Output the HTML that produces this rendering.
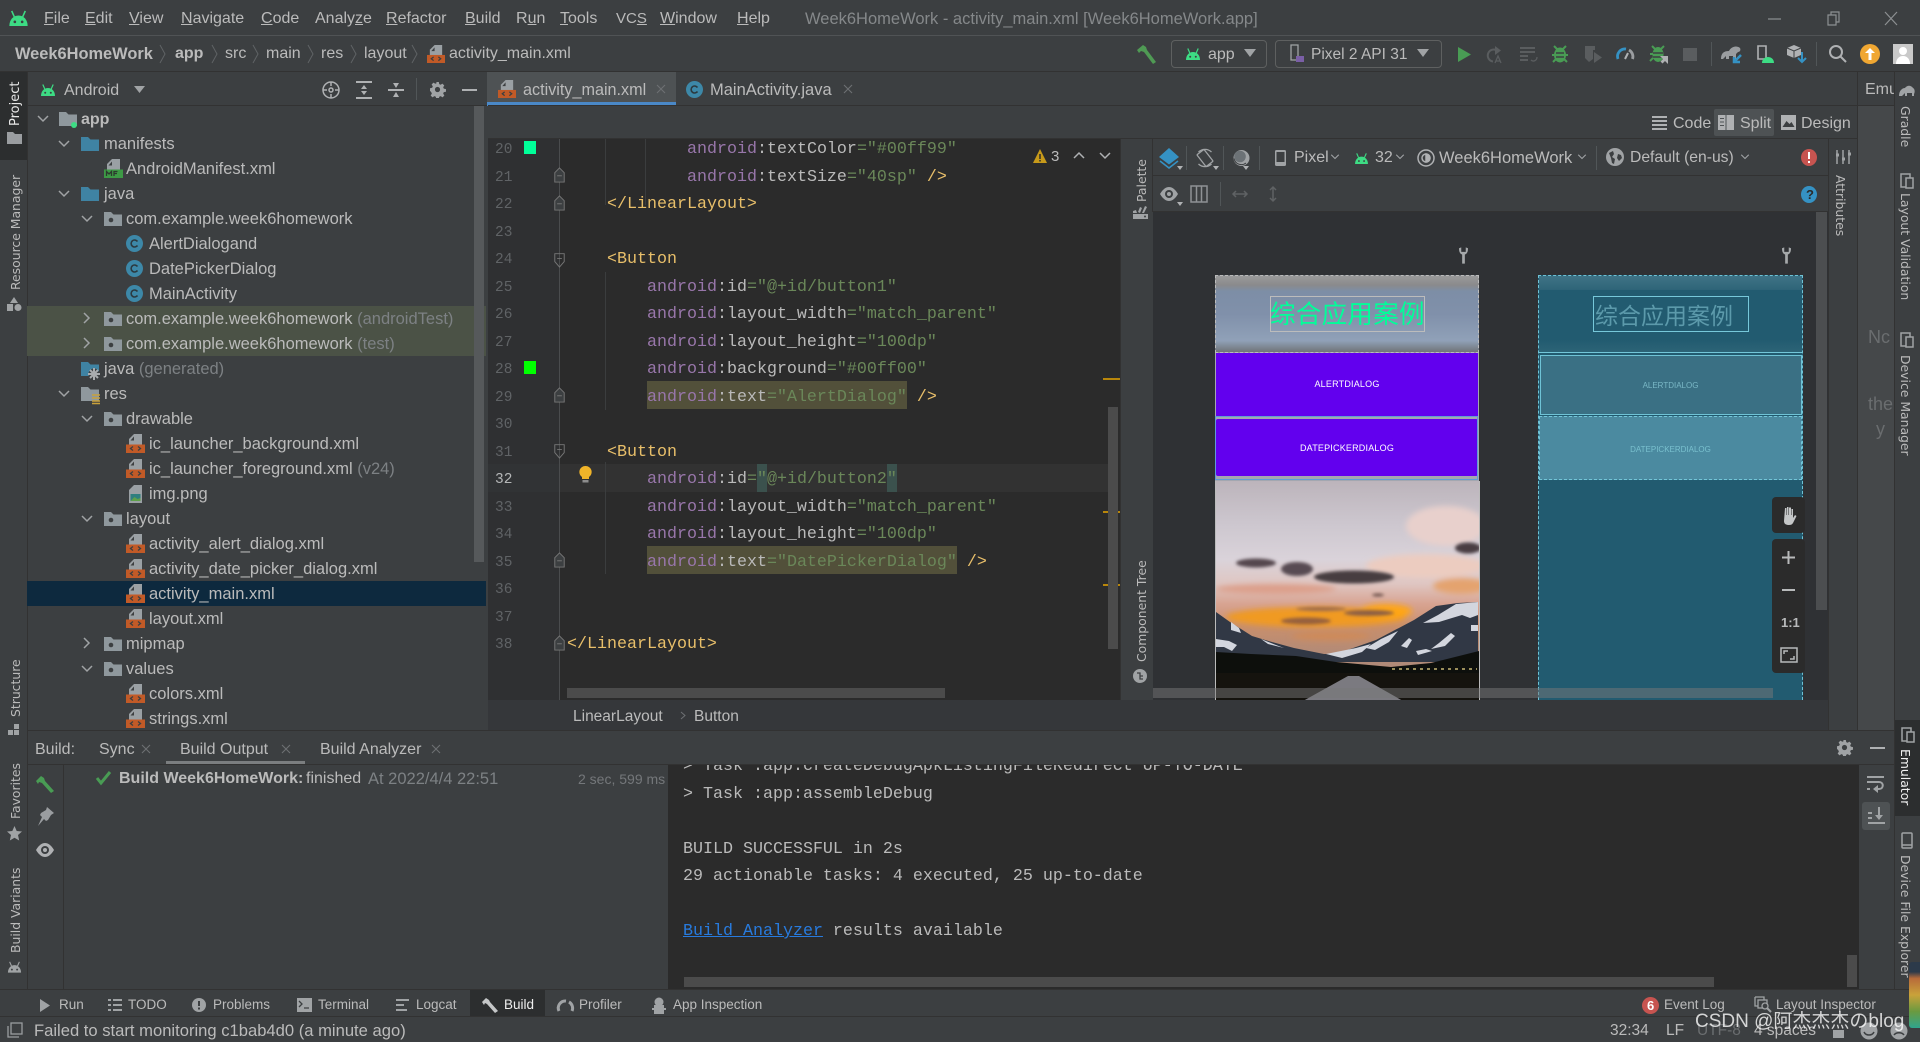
<!DOCTYPE html>
<html><head><meta charset="utf-8"><title>Week6HomeWork</title>
<style>
html,body{margin:0;padding:0;background:#3c3f41}
#a{position:relative;width:1920px;height:1042px;overflow:hidden;background:#3c3f41;font-family:"Liberation Sans","Noto Sans CJK SC",sans-serif;color:#bbb;font-size:16px}
#a div,#a span.t,#a svg.i{position:absolute}
.t{position:absolute;white-space:nowrap;line-height:24px;height:24px}
.g{color:#7d8184}
.b{font-weight:bold}
.r{position:absolute;white-space:nowrap;height:25px;line-height:25px;font-size:16.5px;color:#bbb;margin-top:1px;margin-left:-1px}
.c{position:absolute;white-space:pre;left:0;height:27.5px;line-height:27.5px;margin-top:2px;font-family:"Liberation Mono",monospace;font-size:16.67px;color:#bababa}
.n{position:absolute;left:495px;height:27.5px;line-height:27.5px;margin-top:3px;font-family:"Liberation Mono",monospace;font-size:14.5px;color:#606366}
.p{color:#9876aa}.s{color:#6a8759}.y{color:#e8bf6a}
.v{position:absolute;white-space:nowrap;font-family:"DejaVu Sans",sans-serif;font-size:12.4px;line-height:16px;height:16px;transform-origin:0 0;color:#bbb}
.u{transform:rotate(-90deg)}.w{transform:rotate(90deg)}
.h{font-size:13.5px}
svg.i{overflow:visible}
</style></head><body>
<svg width="0" height="0" style="position:absolute">
<symbol id="and" viewBox="0 0 16 13"><path fill="none" stroke="currentColor" stroke-width="1.200" d="M4.800 6L2.800 1.500M11.200 6l2-4.500"/><path fill="currentColor" d="M1 13C1 8.300 4 5 8 5s7 3.300 7 8z"/><circle cx="5.200" cy="9.800" r="1" fill="#3c3f41"/><circle cx="10.800" cy="9.800" r="1" fill="#3c3f41"/></symbol>
<symbol id="xml" viewBox="0 0 19 19"><path fill="#9aa0a4" d="M8 0h8v11H3V5z"/><path fill="#3c3f41" d="M8 2.500v4H4.500z"/><rect y="10.500" width="19" height="8.500" fill="#c15a27"/><path fill="none" stroke="#3c3f41" stroke-width="1.300" d="M7 12.500l-2.500 2 2.500 2M12 12.500l2.500 2-2.500 2"/></symbol>
<symbol id="mf" viewBox="0 0 19 19"><path fill="#9aa0a4" d="M8 0h8v11H3V5z"/><path fill="#3c3f41" d="M8 2.500v4H4.500z"/><rect y="10.500" width="19" height="8.500" fill="#3d9a45"/><path fill="none" stroke="#2c3a2e" stroke-width="1.300" d="M2.500 17v-4.500L5 15l2.500-2.500V17M10 17v-4.500h3.500M10 14.500h3"/></symbol>
<symbol id="fb" viewBox="0 0 18 14"><path fill="#3f83a3" d="M0 0h7l2.500 2.500H18V14H0z"/></symbol>
<symbol id="fg" viewBox="0 0 18 14"><path fill="#8f989d" d="M0 0h7l2.500 2.500H18V14H0z"/><circle cx="7" cy="8" r="2.300" fill="#3c3f41"/></symbol>
<symbol id="fp" viewBox="0 0 18 14"><path fill="#8f989d" d="M0 0h7l2.500 2.500H18V14H0z"/></symbol>
<symbol id="cl" viewBox="0 0 17 17"><circle cx="8.500" cy="8.500" r="8.500" fill="#3d88a8"/><path fill="none" stroke="#2c3a40" stroke-width="1.600" d="M11.500 6.500A3.500 3.500 0 1 0 11.500 10.500"/></symbol>
<symbol id="dn" viewBox="0 0 12 8"><path fill="none" stroke="#a0a3a5" stroke-width="1.500" d="M1 1l5 5 5-5"/></symbol>
<symbol id="rt" viewBox="0 0 8 12"><path fill="none" stroke="#a0a3a5" stroke-width="1.500" d="M1 1l5 5-5 5"/></symbol>
<symbol id="gr" viewBox="0 0 16 16"><path fill="#a0a3a5" d="M6.600 0h2.800l.4 2.200 1.500.7 1.900-1.200 2 2-1.200 1.900.7 1.500 2.300.5v2.800l-2.300.4-.7 1.600 1.300 1.900-2 2-1.900-1.300-1.600.7-.4 2.300H6.600l-.4-2.300-1.600-.7-1.900 1.300-2-2 1.300-1.900-.7-1.600L0 9.400V6.600l2.300-.5.700-1.500-1.300-1.900 2-2 1.900 1.200 1.500-.7z" transform="scale(.94)"/><circle cx="7.500" cy="7.500" r="2.600" fill="#3c3f41"/></symbol>
<symbol id="fd" viewBox="0 0 14 20"><path fill="#3c3f41" stroke="#777" stroke-width="1.200" d="M7 1L13 7v12H1V7z"/><path fill="none" stroke="#777" stroke-width="1.200" d="M4 11h6"/></symbol>
<symbol id="fdn" viewBox="0 0 14 20"><path fill="none" stroke="#777" stroke-width="1.200" d="M1 2h12v10l-6 7-6-7zM4 8h6"/></symbol>
<symbol id="wr" viewBox="0 0 10 18"><path fill="#a5a8aa" d="M0 1C0 5 1 7 3.500 8v10h3V8C9 7 10 5 10 1L7.500 0v5h-5V0z"/></symbol>
<symbol id="x" viewBox="0 0 10 10"><path stroke="#6d7073" stroke-width="1.100" d="M1 1l8 8M9 1l-8 8"/></symbol>
</svg>
<div id="a">

<!-- top bars -->
<div style="left:0;top:35px;width:1920px;height:1px;background:#505355"></div>
<div style="left:0;top:71px;width:1920px;height:1px;background:#323232"></div>
<svg class="i" style="left:8px;top:9px;color:#3ddc84" width="21" height="17"><use href="#and"/></svg>
<span class="t" style="left:44px;top:7px"><u>F</u>ile</span>
<span class="t" style="left:85px;top:7px"><u>E</u>dit</span>
<span class="t" style="left:129px;top:7px"><u>V</u>iew</span>
<span class="t" style="left:181px;top:7px"><u>N</u>avigate</span>
<span class="t" style="left:261px;top:7px"><u>C</u>ode</span>
<span class="t" style="left:315px;top:7px">Analy<u>z</u>e</span>
<span class="t" style="left:386px;top:7px"><u>R</u>efactor</span>
<span class="t" style="left:465px;top:7px"><u>B</u>uild</span>
<span class="t" style="left:516px;top:7px">R<u>u</u>n</span>
<span class="t" style="left:560px;top:7px"><u>T</u>ools</span>
<span class="t" style="left:616px;top:7px;font-size:15px">VC<u>S</u></span>
<span class="t" style="left:660px;top:7px"><u>W</u>indow</span>
<span class="t" style="left:737px;top:7px"><u>H</u>elp</span>
<span class="t" style="left:805px;top:7px;color:#85888a;font-size:16.500px">Week6HomeWork - activity_main.xml [Week6HomeWork.app]</span>
<svg class="i" style="left:1768px;top:10px" width="130" height="18" fill="none" stroke="#8d9092" stroke-width="1.200"><path d="M0 9h13"/><path d="M60 5h8v10h-8zM63 5V2h8v10h-3"/><path d="M117 2l12 13M129 2l-12 13"/></svg>

<!-- nav -->
<span class="t b" style="left:15px;top:42px;font-size:16.400px">Week6HomeWork</span>
<span class="t b" style="left:175px;top:42px">app</span>
<span class="t" style="left:225px;top:42px">src</span>
<span class="t" style="left:266px;top:42px">main</span>
<span class="t" style="left:321px;top:42px">res</span>
<span class="t" style="left:364px;top:42px">layout</span>
<svg class="i" style="left:160px;top:44px" width="270" height="20" fill="none" stroke="#5f6365"><path d="M0 1l5 9-5 9M52 1l5 9-5 9M93 1l5 9-5 9M148 1l5 9-5 9M191 1l5 9-5 9M252 1l5 9-5 9"/></svg>
<svg class="i" style="left:427px;top:45px" width="18" height="18"><use href="#xml"/></svg>
<span class="t" style="left:449px;top:42px">activity_main.xml</span>

<!-- nav right -->
<svg class="i" style="left:1137px;top:44px" width="22" height="20"><path fill="#4f9a54" d="M0 6l6-5 3 2 1 3 9 12-3 2-9-12-3-1-2 2z"/></svg>
<div style="left:1171px;top:40px;width:94px;height:26px;border:1px solid #5e6060;border-radius:4px"></div>
<svg class="i" style="left:1185px;top:47px;color:#3ddc84" width="16" height="13"><use href="#and"/></svg>
<span class="t" style="left:1208px;top:43px">app</span>
<svg class="i" style="left:1244px;top:49px" width="12" height="8"><path fill="#a0a3a5" d="M0 0h12L6 8z"/></svg>
<div style="left:1275px;top:40px;width:165px;height:26px;border:1px solid #5e6060;border-radius:4px"></div>
<svg class="i" style="left:1290px;top:44px" width="18" height="20" fill="none"><path stroke="#a0a3a5" stroke-width="1.300" d="M1 1h7v15H1z"/><rect x="6" y="12" width="8" height="6" fill="#7a5fa6"/></svg>
<span class="t" style="left:1311px;top:43px;font-size:15.500px">Pixel 2 API 31</span>
<svg class="i" style="left:1417px;top:49px" width="12" height="8"><path fill="#a0a3a5" d="M0 0h12L6 8z"/></svg>
<svg class="i" style="left:1458px;top:47px" width="13" height="15"><path fill="#499c54" d="M0 0l13 7.500L0 15z"/></svg>
<svg class="i" style="left:1486px;top:46px" width="18" height="18" fill="none" stroke="#5a5d5f" stroke-width="2"><path d="M11 4.500a6 6 0 1 0-4 11"/><path fill="#5a5d5f" stroke="none" d="M9 0l6 4.500-6 4.500z"/><path stroke-width="1.300" d="M9 17l3-7 3 7M10 15h4"/></svg>
<svg class="i" style="left:1520px;top:47px" width="18" height="16" stroke="#5a5d5f" stroke-width="2" fill="none"><path d="M0 1h15M0 5h15M0 9h8M0 13h8"/><path stroke-width="1.300" d="M17 10c0 4-4 5-6 3"/></svg>
<svg class="i" style="left:1552px;top:45px" width="16" height="18"><ellipse cx="8" cy="10" rx="6" ry="7.500" fill="#499c54"/><path stroke="#499c54" stroke-width="2" d="M2 1l3 3M14 1l-3 3M0 10h3M16 10h-3M1 17l3-3M15 17l-3-3"/><path stroke="#3c3f41" stroke-width="1.500" d="M4 8h8M4 12h8"/></svg>
<svg class="i" style="left:1584px;top:45px" width="19" height="18"><path fill="#5a5d5f" d="M1 1h10v4H9v9l-4 3-4-4z"/><path fill="#5a5d5f" d="M10 7l8 5.500-8 5.500z"/></svg>
<svg class="i" style="left:1616px;top:47px" width="18" height="13" fill="none" stroke-width="2.800"><path stroke="#3592c4" d="M2 12A7.500 7.500 0 0 1 10 2"/><path stroke="#9a9da0" d="M13 3a7.500 7.500 0 0 1 3.500 9"/><path stroke="#afb1b3" stroke-width="2" d="M9 12l3-6"/></svg>
<svg class="i" style="left:1650px;top:45px" width="20" height="20"><ellipse cx="8" cy="9.500" rx="5.500" ry="7.500" fill="#499c54"/><path stroke="#499c54" stroke-width="2" d="M2 1l3 3M14 1l-3 3M0 9h3M0 16l3-3"/><path stroke="#3c3f41" stroke-width="1.500" d="M3 8h10M3 12h10"/><path fill="#afb1b3" d="M10 11h8v8l-3-3-2.500 2.500-2-2L13 14z"/></svg>
<div style="left:1683px;top:48px;width:14px;height:13px;background:#5a5d5f"></div>
<div style="left:1711px;top:42px;width:1px;height:24px;background:#515658"></div>
<svg class="i" style="left:1721px;top:45px" width="22" height="19"><path fill="#9a9da0" d="M0 14c0-6 3-8 8-8 2-4 7-6 11-3 1 2 0 4-2 4l-2 2v5h-3v-3H8v3H5v-3l-3 3z"/><path fill="none" stroke="#3592c4" stroke-width="2.500" d="M20 10l-7 7M13 12v5h6"/></svg>
<svg class="i" style="left:1757px;top:45px" width="18" height="19"><path fill="none" stroke="#afb1b3" stroke-width="1.600" d="M1 1h8v13H1z"/><path fill="#3ddc84" d="M5 18c0-4 3-6 6-6s6 2 6 6z"/></svg>
<svg class="i" style="left:1787px;top:45px" width="21" height="19"><path fill="#afb1b3" d="M7 0l7 3v7l-7 3-7-3V3z"/><path fill="none" stroke="#3c3f41" d="M0 3l7 3 7-3M7 6v7"/><path stroke="#3592c4" stroke-width="2" fill="none" d="M15 7v10M11 13l4 4 4-4"/></svg>
<div style="left:1816px;top:42px;width:1px;height:24px;background:#515658"></div>
<svg class="i" style="left:1829px;top:45px" width="18" height="18" fill="none" stroke="#afb1b3" stroke-width="2"><circle cx="7" cy="7" r="6"/><path d="M11 11l6 6"/></svg>
<div style="left:1860px;top:44px;width:20px;height:20px;border-radius:50%;background:#f0a732"></div>
<svg class="i" style="left:1865px;top:48px" width="10" height="12"><path fill="#fff" d="M5 0l5 5H6.500v7h-3V5H0z"/></svg>
<div style="left:1893px;top:44px;width:20px;height:20px;background:#c9c9c9"></div>
<svg class="i" style="left:1893px;top:44px" width="20" height="20"><circle cx="10" cy="7" r="4" fill="#fff"/><path fill="#fff" d="M3 20c0-5 3-8 7-8s7 3 7 8z"/></svg>

<!-- left stripe -->
<div style="left:0;top:72px;width:27px;height:88px;background:#2c2e2f"></div>
<div style="left:27px;top:72px;width:1px;height:917px;background:#323232"></div>
<span class="v u" style="left:8px;top:126px;color:#e8e8e8;font-size:13px">Project</span>
<svg class="i" style="left:7px;top:132px" width="15" height="12"><path fill="#9a9da0" d="M0 0h6l2 2h7v10H0z"/></svg>
<span class="v u" style="left:8px;top:290px">Resource Manager</span>
<svg class="i" style="left:7px;top:297px" width="15" height="14"><path fill="#a0a3a5" d="M7 0l4 6H3z"/><rect y="7" width="6" height="7" fill="#a0a3a5"/><circle cx="11" cy="10.500" r="3.500" fill="#a0a3a5"/></svg>
<span class="v u" style="left:8px;top:717px">Structure</span>
<svg class="i" style="left:8px;top:724px" width="12" height="12"><path fill="#a0a3a5" d="M6 0h5v5H6zM0 6h5v5H0zM6 6h5v5H6z"/></svg>
<span class="v u" style="left:8px;top:819px">Favorites</span>
<svg class="i" style="left:7px;top:826px" width="15" height="15"><path fill="#a0a3a5" d="M7.500 0l2.200 5 5.300.5-4 3.500 1.200 5.500-4.700-2.800-4.700 2.800L4 9 0 5.500 5.300 5z"/></svg>
<span class="v u" style="left:8px;top:953px">Build Variants</span>
<svg class="i" style="left:7px;top:960px;color:#a0a3a5" width="15" height="13"><use href="#and"/></svg>

<!-- project header -->
<svg class="i" style="left:40px;top:83px;color:#3ddc84" width="16" height="13"><use href="#and"/></svg>
<span class="t" style="left:64px;top:79px">Android</span>
<svg class="i" style="left:134px;top:86px" width="11" height="7"><path fill="#a0a3a5" d="M0 0h11L5.500 7z"/></svg>
<svg class="i" style="left:322px;top:81px" width="18" height="18" fill="none" stroke="#afb1b3" stroke-width="1.500"><circle cx="9" cy="9" r="8"/><circle cx="9" cy="9" r="2"/><path d="M9 1v4M9 13v4M1 9h4M13 9h4"/></svg>
<svg class="i" style="left:356px;top:81px" width="16" height="18" stroke="#afb1b3" stroke-width="2"><path d="M0 1h16M0 17h16"/><path fill="#afb1b3" stroke="none" d="M8 4l3 4H5zM8 14l3-4H5z"/></svg>
<svg class="i" style="left:388px;top:81px" width="16" height="18" stroke="#afb1b3" stroke-width="2"><path d="M0 9h16"/><path fill="#afb1b3" stroke="none" d="M8 7L5 2h6zM8 11l3 5H5z"/></svg>
<div style="left:416px;top:78px;width:1px;height:22px;background:#515658"></div>
<svg class="i" style="left:430px;top:82px" width="16" height="16"><use href="#gr"/></svg>
<div style="left:462px;top:89px;width:15px;height:2px;background:#afb1b3"></div>
<div style="left:27px;top:105px;width:461px;height:1px;background:#323232"></div>

<!-- tree -->
<div style="left:27px;top:306px;width:459px;height:50px;background:#4b5246"></div>
<div style="left:27px;top:581px;width:459px;height:25px;background:#0d293e"></div>
<div style="left:474px;top:106px;width:10px;height:456px;background:#56595b"></div>

<svg class="i" style="left:37px;top:115px" width="12" height="8"><use href="#dn"/></svg>
<svg class="i" style="left:59px;top:112px" width="18" height="14"><use href="#fp"/></svg>
<div style="left:71px;top:122px;width:6px;height:6px;border-radius:50%;background:#3ddc84"></div>
<span class="r b" style="left:82px;top:106px;font-size:16px">app</span>

<svg class="i" style="left:58px;top:140px" width="12" height="8"><use href="#dn"/></svg>
<svg class="i" style="left:81px;top:137px" width="18" height="14"><use href="#fb"/></svg>
<span class="r" style="left:105px;top:131px">manifests</span>

<svg class="i" style="left:104px;top:159px" width="19" height="19"><use href="#mf"/></svg>
<span class="r" style="left:127px;top:156px">AndroidManifest.xml</span>

<svg class="i" style="left:58px;top:190px" width="12" height="8"><use href="#dn"/></svg>
<svg class="i" style="left:81px;top:187px" width="18" height="14"><use href="#fb"/></svg>
<span class="r" style="left:105px;top:181px">java</span>

<svg class="i" style="left:81px;top:215px" width="12" height="8"><use href="#dn"/></svg>
<svg class="i" style="left:104px;top:212px" width="18" height="14"><use href="#fg"/></svg>
<span class="r" style="left:127px;top:206px">com.example.week6homework</span>

<svg class="i" style="left:126px;top:235px" width="17" height="17"><use href="#cl"/></svg>
<span class="r" style="left:150px;top:231px">AlertDialogand</span>
<svg class="i" style="left:126px;top:260px" width="17" height="17"><use href="#cl"/></svg>
<span class="r" style="left:150px;top:256px">DatePickerDialog</span>
<svg class="i" style="left:126px;top:285px" width="17" height="17"><use href="#cl"/></svg>
<span class="r" style="left:150px;top:281px">MainActivity</span>

<svg class="i" style="left:83px;top:312px" width="8" height="12"><use href="#rt"/></svg>
<svg class="i" style="left:104px;top:312px" width="18" height="14"><use href="#fg"/></svg>
<span class="r" style="left:127px;top:306px">com.example.week6homework <span class="g">(androidTest)</span></span>
<svg class="i" style="left:83px;top:337px" width="8" height="12"><use href="#rt"/></svg>
<svg class="i" style="left:104px;top:337px" width="18" height="14"><use href="#fg"/></svg>
<span class="r" style="left:127px;top:331px">com.example.week6homework <span class="g">(test)</span></span>

<svg class="i" style="left:81px;top:362px" width="18" height="14"><use href="#fb"/></svg>
<svg class="i" style="left:88px;top:368px" width="12" height="12"><circle cx="6" cy="6" r="5.500" fill="#3c3f41"/><path stroke="#a9acae" stroke-width="2" d="M2 2l8 8M10 2l-8 8M6 0v12M0 6h12"/></svg>
<span class="r" style="left:105px;top:356px">java <span class="g">(generated)</span></span>

<svg class="i" style="left:58px;top:390px" width="12" height="8"><use href="#dn"/></svg>
<svg class="i" style="left:81px;top:387px" width="18" height="14"><use href="#fp"/></svg>
<svg class="i" style="left:92px;top:394px" width="8" height="10"><path stroke="#c9a13b" stroke-width="1.500" d="M0 1h8M0 4h8M0 7h8M0 9.500h8"/></svg>
<span class="r" style="left:105px;top:381px">res</span>

<svg class="i" style="left:81px;top:415px" width="12" height="8"><use href="#dn"/></svg>
<svg class="i" style="left:104px;top:412px" width="18" height="14"><use href="#fg"/></svg>
<span class="r" style="left:127px;top:406px">drawable</span>

<svg class="i" style="left:126px;top:434px" width="19" height="19"><use href="#xml"/></svg>
<span class="r" style="left:150px;top:431px">ic_launcher_background.xml</span>
<svg class="i" style="left:126px;top:459px" width="19" height="19"><use href="#xml"/></svg>
<span class="r" style="left:150px;top:456px">ic_launcher_foreground.xml <span class="g">(v24)</span></span>
<svg class="i" style="left:129px;top:485px" width="13" height="18"><path fill="#9aa0a4" d="M5 0h8v18H0V5z"/><rect x="1.500" y="9" width="10" height="7" fill="#2f7f7f"/><path fill="#5ea04a" d="M1.500 16l4-4 3 2 3-1v3z"/></svg>
<span class="r" style="left:150px;top:481px">img.png</span>

<svg class="i" style="left:81px;top:515px" width="12" height="8"><use href="#dn"/></svg>
<svg class="i" style="left:104px;top:512px" width="18" height="14"><use href="#fg"/></svg>
<span class="r" style="left:127px;top:506px">layout</span>

<svg class="i" style="left:126px;top:534px" width="19" height="19"><use href="#xml"/></svg>
<span class="r" style="left:150px;top:531px">activity_alert_dialog.xml</span>
<svg class="i" style="left:126px;top:559px" width="19" height="19"><use href="#xml"/></svg>
<span class="r" style="left:150px;top:556px">activity_date_picker_dialog.xml</span>
<svg class="i" style="left:126px;top:584px" width="19" height="19"><use href="#xml"/></svg>
<span class="r" style="left:150px;top:581px">activity_main.xml</span>
<svg class="i" style="left:126px;top:609px" width="19" height="19"><use href="#xml"/></svg>
<span class="r" style="left:150px;top:606px">layout.xml</span>

<svg class="i" style="left:83px;top:637px" width="8" height="12"><use href="#rt"/></svg>
<svg class="i" style="left:104px;top:637px" width="18" height="14"><use href="#fg"/></svg>
<span class="r" style="left:127px;top:631px">mipmap</span>

<svg class="i" style="left:81px;top:665px" width="12" height="8"><use href="#dn"/></svg>
<svg class="i" style="left:104px;top:662px" width="18" height="14"><use href="#fg"/></svg>
<span class="r" style="left:127px;top:656px">values</span>

<svg class="i" style="left:126px;top:684px" width="19" height="19"><use href="#xml"/></svg>
<span class="r" style="left:150px;top:681px">colors.xml</span>
<svg class="i" style="left:126px;top:709px" width="19" height="19"><use href="#xml"/></svg>
<span class="r" style="left:150px;top:706px">strings.xml</span>

<!-- tabs -->
<div style="left:487px;top:72px;width:189px;height:30px;background:#4e5254"></div>
<div style="left:487px;top:102px;width:189px;height:4px;background:#4a88c7"></div>
<svg class="i" style="left:498px;top:80px" width="18" height="18"><use href="#xml"/></svg>
<span class="t" style="left:523px;top:78px;font-size:16.200px">activity_main.xml</span>
<svg class="i" style="left:656px;top:84px" width="10" height="10"><use href="#x"/></svg>
<svg class="i" style="left:686px;top:81px" width="17" height="17"><use href="#cl"/></svg>
<span class="t" style="left:710px;top:78px;font-size:16.500px">MainActivity.java</span>
<svg class="i" style="left:843px;top:84px" width="10" height="10"><use href="#x"/></svg>
<div style="left:1857px;top:72px;width:1px;height:33px;background:#323232"></div>
<span class="t" style="left:1865px;top:78px">Emu</span>
<div style="left:488px;top:105px;width:1406px;height:1px;background:#323232"></div>

<!-- editor toolbar -->
<div style="left:1714px;top:109px;width:60px;height:27px;background:#4e5254;border-radius:2px"></div>
<svg class="i" style="left:1652px;top:116px" width="15" height="14" stroke="#afb1b3" stroke-width="2"><path d="M0 1h15M0 5h15M0 9h15M0 13h15"/></svg>
<span class="t" style="left:1673px;top:112px">Code</span>
<svg class="i" style="left:1718px;top:115px" width="16" height="15"><rect width="16" height="15" fill="#afb1b3"/><path stroke="#4e5254" d="M8 0v15M2 3.500h4M2 7h4M2 10.500h4"/></svg>
<span class="t" style="left:1740px;top:112px">Split</span>
<svg class="i" style="left:1781px;top:115px" width="15" height="15"><rect width="15" height="15" fill="#afb1b3"/><path fill="#3c3f41" d="M1.500 12l4-6 3 3 2-2 3 5z"/></svg>
<span class="t" style="left:1801px;top:112px">Design</span>
<div style="left:488px;top:138px;width:1406px;height:1px;background:#323232"></div>

<!-- editor -->
<div style="left:488px;top:139px;width:632px;height:561px;background:#2b2b2b"></div>
<div style="left:488px;top:139px;width:71px;height:561px;background:#2f3032"></div>
<div style="left:559px;top:464px;width:549px;height:28px;background:#323232"></div>
<div style="left:488px;top:464px;width:71px;height:28px;background:#313335"></div>
<div style="left:559px;top:139px;width:1px;height:561px;background:#4a4c4e"></div>
<div style="left:605px;top:139px;width:1px;height:66px;background:#3b3d3e"></div>
<div style="left:645px;top:139px;width:1px;height:66px;background:#3b3d3e"></div>
<div style="left:605px;top:272px;width:1px;height:138px;background:#3b3d3e"></div>
<div style="left:605px;top:462px;width:1px;height:112px;background:#3b3d3e"></div>
<div style="left:524px;top:141px;width:12px;height:13px;background:#00ff99"></div>
<div style="left:524px;top:361px;width:12px;height:13px;background:#00ff00"></div>
<svg class="i" style="left:554px;top:167px" width="11" height="16"><use href="#fd"/></svg>
<svg class="i" style="left:554px;top:195px" width="11" height="16"><use href="#fd"/></svg>
<svg class="i" style="left:554px;top:252px" width="11" height="16"><use href="#fdn"/></svg>
<svg class="i" style="left:554px;top:387px" width="11" height="16"><use href="#fd"/></svg>
<svg class="i" style="left:554px;top:443px" width="11" height="16"><use href="#fdn"/></svg>
<svg class="i" style="left:554px;top:552px" width="11" height="16"><use href="#fd"/></svg>
<svg class="i" style="left:554px;top:635px" width="11" height="16"><use href="#fd"/></svg>
<svg class="i" style="left:579px;top:466px" width="13" height="18"><path fill="#f0b429" d="M6.500 0a6 6 0 0 1 3.500 11v2H3v-2A6 6 0 0 1 6.500 0z"/><rect x="3.500" y="14" width="6" height="2.500" fill="#8d8d8d"/></svg>

<span class="n" style="top:134.250px">20</span><span class="n" style="top:161.750px">21</span><span class="n" style="top:189.250px">22</span><span class="n" style="top:216.750px">23</span><span class="n" style="top:244.250px">24</span><span class="n" style="top:271.750px">25</span><span class="n" style="top:299.250px">26</span><span class="n" style="top:326.750px">27</span><span class="n" style="top:354.250px">28</span><span class="n" style="top:381.750px">29</span><span class="n" style="top:409.250px">30</span><span class="n" style="top:436.750px">31</span><span class="n" style="top:464.250px;color:#b5b7b8">32</span><span class="n" style="top:491.750px">33</span><span class="n" style="top:519.250px">34</span><span class="n" style="top:546.750px">35</span><span class="n" style="top:574.250px">36</span><span class="n" style="top:601.750px">37</span><span class="n" style="top:629.250px">38</span>

<div style="left:647px;top:381px;width:260px;height:28px;background:#52503a"></div>
<div style="left:647px;top:546px;width:310px;height:28px;background:#52503a"></div>
<div style="left:757px;top:464px;width:10px;height:28px;background:#3b514d"></div>
<div style="left:887px;top:464px;width:10px;height:28px;background:#3b514d"></div>

<span class="c" style="left:687px;top:134.250px"><span class="p">android</span>:textColor<span class="s">="#00ff99"</span></span>
<span class="c" style="left:687px;top:161.750px"><span class="p">android</span>:textSize<span class="s">="40sp"</span> <span class="y">/&gt;</span></span>
<span class="c y" style="left:607px;top:189.250px">&lt;/LinearLayout&gt;</span>
<span class="c y" style="left:607px;top:244.250px">&lt;Button</span>
<span class="c" style="left:647px;top:271.750px"><span class="p">android</span>:id<span class="s">="@+id/button1"</span></span>
<span class="c" style="left:647px;top:299.250px"><span class="p">android</span>:layout_width<span class="s">="match_parent"</span></span>
<span class="c" style="left:647px;top:326.750px"><span class="p">android</span>:layout_height<span class="s">="100dp"</span></span>
<span class="c" style="left:647px;top:354.250px"><span class="p">android</span>:background<span class="s">="#00ff00"</span></span>
<span class="c" style="left:647px;top:381.750px"><span class="p">android</span>:text<span class="s">="AlertDialog"</span> <span class="y">/&gt;</span></span>
<span class="c y" style="left:607px;top:436.750px">&lt;Button</span>
<span class="c" style="left:647px;top:464.250px"><span class="p">android</span>:id<span class="s">="@+id/button2"</span></span>
<span class="c" style="left:647px;top:491.750px"><span class="p">android</span>:layout_width<span class="s">="match_parent"</span></span>
<span class="c" style="left:647px;top:519.250px"><span class="p">android</span>:layout_height<span class="s">="100dp"</span></span>
<span class="c" style="left:647px;top:546.750px"><span class="p">android</span>:text<span class="s">="DatePickerDialog"</span> <span class="y">/&gt;</span></span>
<span class="c y" style="left:567px;top:629.250px">&lt;/LinearLayout&gt;</span>

<svg class="i" style="left:1033px;top:149px" width="14" height="14"><path fill="#c79a1a" d="M7 0l7 14H0z"/><path stroke="#2b2b2b" stroke-width="1.500" d="M7 5v5M7 11v1.500"/></svg>
<span class="t" style="left:1051px;top:145px;font-size:15px">3</span>
<svg class="i" style="left:1074px;top:152px" width="40" height="8" fill="none" stroke="#afb1b3" stroke-width="1.500"><path d="M0 6l5-5 5 5M26 1l5 5 5-5"/></svg>
<div style="left:1103px;top:378px;width:17px;height:2px;background:#b8860b"></div>
<div style="left:1103px;top:511px;width:17px;height:2px;background:#b8860b"></div>
<div style="left:1103px;top:584px;width:17px;height:2px;background:#b8860b"></div>
<div style="left:1108px;top:407px;width:10px;height:242px;background:#4b4b4b"></div>
<div style="left:567px;top:688px;width:378px;height:10px;background:#4b4b4b"></div>

<!-- palette stripe -->
<div style="left:1120px;top:139px;width:1px;height:591px;background:#323232"></div>
<span class="v u" style="left:1134px;top:202px">Palette</span>
<svg class="i" style="left:1133px;top:205px" width="15" height="14"><path fill="#a0a3a5" d="M0 6l3-1 1 3H0zM5 7l2-5 2 1-2 5zM9 8l3-7 2 1-3 6z"/><rect y="9" width="15" height="5" fill="#a0a3a5"/><circle cx="12" cy="11.500" r="1" fill="#3c3f41"/></svg>
<span class="v u" style="left:1134px;top:662px">Component Tree</span>
<svg class="i" style="left:1133px;top:669px" width="14" height="14"><circle cx="7" cy="7" r="7" fill="#a0a3a5"/><path fill="none" stroke="#3c3f41" stroke-width="1.300" d="M4 4h3v6h3M7 7h3"/></svg>

<!-- design toolbars -->
<div style="left:1152px;top:175px;width:676px;height:1px;background:#323232"></div>
<div style="left:1152px;top:139px;width:1px;height:72px;background:#323232"></div>
<div style="left:1152px;top:211px;width:676px;height:1px;background:#323232"></div>
<svg class="i" style="left:1159px;top:148px" width="20" height="21"><path fill="#3592c4" d="M10 0l10 9-10 7.500L0 9z"/><path fill="none" stroke="#3592c4" stroke-width="1.600" d="M1 13l9 7 9-7"/></svg>
<svg class="i" style="left:1195px;top:148px" width="20" height="20" fill="none" stroke="#a0a3a5" stroke-width="1.300"><path d="M3.500 4A9.300 9.300 0 0 1 16.500 4M16.500 16A9.300 9.300 0 0 1 3.500 16"/><rect x="5.500" y="2.500" width="9" height="15" rx="1" transform="rotate(-38 10 10)"/></svg>
<svg class="i" style="left:1233px;top:150px" width="17" height="16"><circle cx="8.500" cy="8" r="8" fill="#a0a3a5"/><circle cx="7" cy="6.500" r="5.800" fill="#6c7276"/><path fill="none" stroke="#3c3f41" stroke-width="1" d="M1 8.500A7.500 7.500 0 0 0 13 13"/></svg>
<svg class="i" style="left:1177px;top:166px" width="72" height="5"><path fill="#afb1b3" d="M0 0h6L3 4zM36 0h6l-3 4zM66 0h6l-3 4z"/></svg>
<div style="left:1186px;top:146px;width:1px;height:24px;background:#515658"></div>
<div style="left:1223px;top:146px;width:1px;height:24px;background:#515658"></div>
<div style="left:1259px;top:146px;width:1px;height:24px;background:#515658"></div>
<svg class="i" style="left:1275px;top:150px" width="11" height="16"><rect width="11" height="16" rx="1.500" fill="#a0a3a5"/><rect x="1.500" y="2" width="8" height="10" fill="#3c3f41"/></svg>
<span class="t" style="left:1294px;top:146px">Pixel</span>
<svg class="i" style="left:1330px;top:154px" width="10" height="6"><use href="#dn"/></svg>
<svg class="i" style="left:1354px;top:152px;color:#3ddc84" width="15" height="12"><use href="#and"/></svg>
<span class="t" style="left:1375px;top:146px">32</span>
<svg class="i" style="left:1395px;top:154px" width="10" height="6"><use href="#dn"/></svg>
<svg class="i" style="left:1417px;top:149px" width="18" height="18" fill="none" stroke="#afb1b3" stroke-width="1.500"><circle cx="9" cy="9" r="8"/><circle cx="9" cy="9" r="4"/><path fill="#afb1b3" d="M9 5a4 4 0 0 1 0 8z"/></svg>
<span class="t" style="left:1439px;top:146px;font-size:16.500px">Week6HomeWork</span>
<svg class="i" style="left:1577px;top:154px" width="10" height="6"><use href="#dn"/></svg>
<div style="left:1596px;top:146px;width:1px;height:24px;background:#515658"></div>
<svg class="i" style="left:1606px;top:148px" width="18" height="18"><circle cx="9" cy="9" r="9" fill="#a0a3a5"/><path fill="#3c3f41" d="M3 5l4-2 1 3-2 3 3 2-1 5-2-1-1-5zM12 6l3 1 1 3-3 3-2-3z"/></svg>
<span class="t" style="left:1630px;top:146px;font-size:15.700px">Default (en-us)</span>
<svg class="i" style="left:1740px;top:154px" width="10" height="6"><use href="#dn"/></svg>
<div style="left:1801px;top:149px;width:16px;height:17px;border-radius:50%;background:#c75450"></div>
<div style="left:1808px;top:152px;width:2px;height:7px;background:#fff"></div>
<div style="left:1808px;top:161px;width:2px;height:2px;background:#fff"></div>
<svg class="i" style="left:1160px;top:187px" width="18" height="14"><path fill="#a0a3a5" d="M0 7c3-5 6-7 9-7s6 2 9 7c-3 5-6 7-9 7S3 12 0 7z"/><circle cx="9" cy="7" r="4" fill="#3c3f41"/><circle cx="9" cy="7" r="2" fill="#a0a3a5"/></svg>
<svg class="i" style="left:1177px;top:202px" width="7" height="4"><path fill="#afb1b3" d="M0 0h6L3 4z"/></svg>
<svg class="i" style="left:1190px;top:185px" width="18" height="18" fill="none" stroke="#8f9295" stroke-width="1.500"><rect x="1" y="1" width="16" height="16"/><path d="M6.500 1v16M11.500 1v16"/></svg>
<div style="left:1220px;top:182px;width:1px;height:24px;background:#515658"></div>
<svg class="i" style="left:1232px;top:190px" width="16" height="8" fill="none" stroke="#5f6264" stroke-width="1.500"><path d="M1 4h14M4 1L1 4l3 3M12 1l3 3-3 3"/></svg>
<svg class="i" style="left:1269px;top:186px" width="8" height="16" fill="none" stroke="#5f6264" stroke-width="1.500"><path d="M4 1v14M1 4l3-3 3 3M1 12l3 3 3-3"/></svg>
<div style="left:1801px;top:186px;width:16px;height:17px;border-radius:50%;background:#3592c4"></div>
<span class="t" style="left:1806px;top:183px;font-size:13px;color:#2b2b2b;font-weight:bold">?</span>

<!-- design surface -->
<div style="left:1153px;top:212px;width:675px;height:488px;background:#2f3134"></div>
<svg class="i" style="left:1459px;top:247px" width="9" height="17"><use href="#wr"/></svg>
<svg class="i" style="left:1782px;top:247px" width="9" height="17"><use href="#wr"/></svg>

<!-- left phone -->
<div style="left:1215px;top:275px;width:264px;height:78px;background:linear-gradient(#9a9a9a 0,#8a8a8c 12%,#7d8ea6 20%,#8090aa 50%,#90a1b8 85%,#707478 100%);box-sizing:border-box;border:1px dashed #bbb"></div>
<div style="left:1270px;top:296px;width:153px;height:34px;border:1px solid #bcbcbc"></div>
<span class="t" style="left:1270px;top:295px;height:36px;line-height:36px;font-size:25.500px;color:#00ff99;letter-spacing:.3px;font-family:'WenQuanYi Zen Hei','Noto Sans CJK SC',sans-serif">综合应用案例</span>
<div style="left:1215px;top:353px;width:264px;height:128px;background:#a3a7b0"></div>
<div style="left:1216px;top:353px;width:262px;height:63px;background:#6200ee"></div>
<div style="left:1216px;top:419px;width:262px;height:57px;background:#6200ee;border-radius:2px"></div>
<div style="left:1215px;top:416px;width:263px;height:64px;box-sizing:border-box;border:1px solid #5f9bd8"></div>
<span class="t" style="left:1216px;width:262px;text-align:center;top:372px;font-size:9px;color:#fff;letter-spacing:.2px">ALERTDIALOG</span>
<span class="t" style="left:1216px;width:262px;text-align:center;top:436px;font-size:9px;color:#fff;letter-spacing:.2px">DATEPICKERDIALOG</span>
<svg class="i" style="left:1216px;top:481px;overflow:hidden" width="263" height="219" viewBox="0 0 263 219">
<defs>
<linearGradient id="sk" x1="0" y1="0" x2="0" y2="1"><stop offset="0" stop-color="#bcb4bb"/><stop offset=".2" stop-color="#cdc7cf"/><stop offset=".36" stop-color="#dad3da"/><stop offset=".47" stop-color="#dfc6c2"/><stop offset=".56" stop-color="#d8a492"/><stop offset=".66" stop-color="#c98f6c"/><stop offset=".8" stop-color="#b08a78"/></linearGradient>
<filter id="bl"><feGaussianBlur stdDeviation="3"/></filter><filter id="b2"><feGaussianBlur stdDeviation="1.500"/></filter>
</defs>
<rect width="263" height="219" fill="url(#sk)"/>
<g filter="url(#bl)"><ellipse cx="230" cy="45" rx="40" ry="20" fill="#e8d0cc"/><ellipse cx="210" cy="85" rx="60" ry="12" fill="#ecccc0"/><ellipse cx="60" cy="108" rx="60" ry="5" fill="#dc9f8a"/><ellipse cx="245" cy="105" rx="28" ry="8" fill="#e4a36e"/><ellipse cx="100" cy="136" rx="90" ry="10" fill="#f09a22"/><ellipse cx="170" cy="130" rx="26" ry="7" fill="#ffa617"/><ellipse cx="115" cy="155" rx="40" ry="4" fill="#cf8a58"/></g>
<g filter="url(#b2)"><ellipse cx="40" cy="82" rx="20" ry="4.500" fill="#54474d"/><ellipse cx="81" cy="88" rx="16" ry="7" fill="#584c52"/><ellipse cx="138" cy="96" rx="40" ry="6.500" fill="#473c41"/><ellipse cx="252" cy="67" rx="13" ry="5.500" fill="#4a3e42"/><ellipse cx="105" cy="128" rx="25" ry="2" fill="#9c6a4a"/><ellipse cx="153" cy="132" rx="25" ry="3" fill="#8c5f44"/><ellipse cx="90" cy="140" rx="25" ry="3.500" fill="#96603e"/><ellipse cx="162" cy="114" rx="6" ry="1.500" fill="#6a5048"/></g>
<path fill="#313845" d="M0 131l14 10 22 14 20 6 22 6 30 6 12 0 40-14 38-20 22-14 22-3 20-1v60H0z"/>
<path fill="#d3d6de" d="M262 121l-22 2-18 11-15 8 16-1 13-4 10-3 8 3 8-3zM165 158l17-8-9 11-14 8-9-2zM110 173l30-6 15-4-9 8-20 6zM0 158l13 2 8 4-5 6-8-4-8 0zM15 141l8 6 2 5-10-3zM45 158l15 6 8 3-16-4zM235 152l-12 10-8 6 14-3 10-10zM200 170l10-2 6 2-14 4zM255 144h7v6h-7zM185 165l8-8 3 2-5 8z"/>
<path fill="#0d0f0c" d="M0 171l35 2 45 2 40 6 55 5 40-4 48-12v30H0z"/>
<rect y="192" width="263" height="27" fill="#15130e"/>
<path fill="#7b7a80" d="M132 195h11l44 25H87z"/>
<path stroke="#f0d98a" stroke-width="1.200" stroke-dasharray="3 4" d="M176 188h85"/>
</svg>
<div style="left:1215px;top:481px;width:1px;height:219px;background:#bbb"></div>
<div style="left:1479px;top:481px;width:1px;height:219px;background:#bbb"></div>

<!-- right phone -->
<div style="left:1538px;top:275px;width:265px;height:425px;background:#225b70;box-sizing:border-box;border:1px dashed #6fc3d6;border-bottom:0"></div>
<div style="left:1539px;top:276px;width:263px;height:14px;background:linear-gradient(#3f7386,#2e6478)"></div>
<div style="left:1539px;top:340px;width:263px;height:12px;background:linear-gradient(#225b70,#2c6376)"></div>
<div style="left:1593px;top:296px;width:154px;height:34px;border:1px solid #77c8da"></div>
<span class="t" style="left:1595px;top:296px;height:36px;line-height:36px;font-size:23px;color:#5c9aab;font-family:'WenQuanYi Zen Hei','Noto Sans CJK SC',sans-serif">综合应用案例</span>
<div style="left:1539px;top:352px;width:263px;height:1px;background:#73c6d9"></div>
<div style="left:1540px;top:355px;width:260px;height:58px;background:#3a7084;border:1px solid #6fc3d6"></div>
<div style="left:1539px;top:416px;width:263px;height:64px;background:#4b8aa0;box-sizing:border-box;border:1px dashed #73c6d9"></div>
<span class="t" style="left:1539px;width:263px;text-align:center;top:374px;font-size:8px;color:#79b7c5">ALERTDIALOG</span>
<span class="t" style="left:1539px;width:263px;text-align:center;top:438px;font-size:8px;color:#79c0ce">DATEPICKERDIALOG</span>

<!-- scrollbars + zoom -->
<div style="left:1153px;top:688px;width:620px;height:10px;background:rgba(120,120,120,.5)"></div>
<div style="left:1816px;top:212px;width:11px;height:398px;background:#4c4e50"></div>
<div style="left:1772px;top:497px;width:33px;height:36px;background:#2b2b2b;border-radius:4px"></div>
<div style="left:1772px;top:539px;width:33px;height:134px;background:#2b2b2b;border-radius:4px"></div>
<svg class="i" style="left:1780px;top:506px" width="17" height="19"><path fill="#c5c7c8" d="M5 2h1.500v7h.5V1h1.500v8h.5V1.500H11V9h.5V3H13v9l2-3 1.500 1L13 17c-1 1.500-2 2-4 2-3 0-5-1-5-4z"/></svg>
<svg class="i" style="left:1782px;top:551px" width="13" height="13" stroke="#b8babb" stroke-width="2"><path d="M6.500 0v13M0 6.500h13"/></svg>
<div style="left:1782px;top:589px;width:13px;height:2px;background:#b8babb"></div>
<span class="t b" style="left:1781px;top:611px;font-size:13px;color:#b8babb">1:1</span>
<svg class="i" style="left:1780px;top:647px" width="18" height="16" fill="none" stroke="#b8babb" stroke-width="1.500"><rect x="1" y="1" width="16" height="14"/><path d="M4 7V4h4M14 9v3h-4"/></svg>

<!-- attributes stripe -->
<div style="left:1828px;top:139px;width:1px;height:591px;background:#323232"></div>
<svg class="i" style="left:1836px;top:150px" width="14" height="14" stroke="#a0a3a5" stroke-width="1.500"><path d="M1 0v14M7 0v14M13 0v14"/><path stroke-width="3" d="M0 5h3M6 9h3M12 4h3"/></svg>
<span class="v w" style="left:1848px;top:175px">Attributes</span>

<!-- emulator panel -->
<div style="left:1857px;top:106px;width:38px;height:624px;background:#45484a"></div>
<div style="left:1857px;top:72px;width:1px;height:658px;background:#323232"></div>
<span class="t" style="left:1868px;top:325px;font-size:18px;color:#6a6d6f;width:26px;overflow:hidden">Nc</span>
<span class="t" style="left:1868px;top:392px;font-size:18px;color:#6a6d6f;width:26px;overflow:hidden">the</span>
<span class="t" style="left:1876px;top:417px;font-size:18px;color:#6a6d6f;width:18px;overflow:hidden">y</span>

<!-- right stripe -->
<div style="left:1894px;top:72px;width:26px;height:917px;background:#3c3f41;border-left:1px solid #323232;box-sizing:border-box"></div>
<svg class="i" style="left:1899px;top:84px" width="16" height="13"><path fill="#a0a3a5" d="M0 12c0-5 3-8 6-8 2-3 6-3 8 0 2 1 2 4 1 6v2h-2V9H8v3H6V9l-3 3z"/></svg>
<span class="v w" style="left:1913px;top:106px">Gradle</span>
<svg class="i" style="left:1900px;top:173px" width="14" height="16" fill="none" stroke="#a0a3a5" stroke-width="1.500"><rect x="1" y="1" width="9" height="13"/><rect x="6" y="5" width="7" height="10" fill="#3c3f41"/></svg>
<span class="v w" style="left:1913px;top:193px">Layout Validation</span>
<svg class="i" style="left:1900px;top:332px" width="14" height="16" fill="none" stroke="#a0a3a5" stroke-width="1.500"><rect x="1" y="1" width="9" height="13"/><rect x="6" y="5" width="7" height="10" fill="#3c3f41"/></svg>
<span class="v w" style="left:1913px;top:355px">Device Manager</span>
<div style="left:1895px;top:720px;width:25px;height:96px;background:#2c2e2f"></div>
<svg class="i" style="left:1901px;top:727px" width="14" height="16" fill="none" stroke="#a0a3a5" stroke-width="1.500"><rect x="1" y="1" width="9" height="13"/><rect x="6" y="5" width="7" height="10" fill="#2c2e2f"/></svg>
<span class="v w" style="left:1913px;top:749px;color:#f0f0f0">Emulator</span>
<svg class="i" style="left:1901px;top:832px" width="12" height="17" fill="none" stroke="#a0a3a5" stroke-width="1.500"><rect x="1" y="1" width="10" height="15" rx="1"/><path d="M1 13h10"/></svg>
<span class="v w" style="left:1913px;top:855px">Device File Explorer</span>

<!-- breadcrumb -->
<div style="left:488px;top:700px;width:1340px;height:30px;background:#35373a"></div>
<span class="t" style="left:573px;top:705px;font-size:15.500px">LinearLayout</span>
<svg class="i" style="left:680px;top:711px" width="6" height="9" fill="none" stroke="#6d7073"><path d="M1 1l4 3.500-4 3.500"/></svg>
<span class="t" style="left:694px;top:705px;font-size:15.500px">Button</span>
<div style="left:27px;top:730px;width:1867px;height:1px;background:#323232"></div>

<!-- build panel -->
<span class="t" style="left:35px;top:738px">Build:</span>
<span class="t" style="left:99px;top:738px">Sync</span>
<svg class="i" style="left:141px;top:744px" width="10" height="10"><use href="#x"/></svg>
<span class="t" style="left:180px;top:738px">Build Output</span>
<svg class="i" style="left:281px;top:744px" width="10" height="10"><use href="#x"/></svg>
<div style="left:166px;top:761px;width:139px;height:3px;background:#7b7e80"></div>
<span class="t" style="left:320px;top:738px">Build Analyzer</span>
<svg class="i" style="left:431px;top:744px" width="10" height="10"><use href="#x"/></svg>
<svg class="i" style="left:1837px;top:740px" width="16" height="16"><use href="#gr"/></svg>
<div style="left:1870px;top:747px;width:15px;height:2px;background:#afb1b3"></div>
<div style="left:27px;top:764px;width:1867px;height:1px;background:#323232"></div>
<div style="left:63px;top:765px;width:1px;height:224px;background:#323232"></div>
<svg class="i" style="left:36px;top:775px" width="19" height="19"><path fill="#499c54" d="M0 6l5-5 3 2 1 3 9 10-3 2-9-10-3-1-1 2z"/></svg>
<svg class="i" style="left:36px;top:807px" width="18" height="19"><path fill="#9a9da0" d="M11 0l7 6-3 2-3 5-2 1-2-2-6 7 4-9-2-2 1-2 5-3z"/></svg>
<svg class="i" style="left:36px;top:843px" width="18" height="14"><path fill="#afb1b3" d="M0 7c3-5 6-7 9-7s6 2 9 7c-3 5-6 7-9 7S3 12 0 7z"/><circle cx="9" cy="7" r="4" fill="#3c3f41"/><circle cx="9" cy="7" r="2" fill="#afb1b3"/></svg>
<svg class="i" style="left:96px;top:771px" width="16" height="14"><path fill="none" stroke="#499c54" stroke-width="3" d="M1 7l4 5 9-11"/></svg>
<span class="t" style="left:119px;top:767px;font-size:16px"><b>Build Week6HomeWork:</b></span>
<span class="t" style="left:306px;top:767px;font-size:16px">finished</span>
<span class="t g" style="left:368px;top:767px;font-size:16.500px">At 2022/4/4 22:51</span>
<span class="t" style="left:578px;top:767px;font-size:14px;color:#74777a">2 sec, 599 ms</span>

<!-- console -->
<div style="left:668px;top:765px;width:1191px;height:224px;background:#2b2b2b;overflow:hidden">
<span class="c" style="left:15px;top:-14px">&gt; Task :app:createDebugApkListingFileRedirect UP-TO-DATE</span>
<span class="c" style="left:15px;top:14px">&gt; Task :app:assembleDebug</span>
<span class="c" style="left:15px;top:69px">BUILD SUCCESSFUL in 2s</span>
<span class="c" style="left:15px;top:96px">29 actionable tasks: 4 executed, 25 up-to-date</span>
<span class="c" style="left:15px;top:151px"><u style="color:#287bde">Build Analyzer</u> results available</span>
</div>
<div style="left:684px;top:977px;width:1030px;height:10px;background:#4b4b4b"></div>
<div style="left:1847px;top:955px;width:10px;height:32px;background:#4b4b4b"></div>
<svg class="i" style="left:1867px;top:776px" width="18" height="17" fill="none" stroke="#a0a3a5" stroke-width="2"><path d="M0 1h17M0 6h12c5 0 5 7 0 7H8M0 13h3"/><path fill="#a0a3a5" stroke="none" d="M11 9v8l-5-4z"/></svg>
<div style="left:1862px;top:802px;width:28px;height:28px;background:#4e5254;border-radius:3px"></div>
<svg class="i" style="left:1868px;top:807px" width="17" height="17" stroke="#a0a3a5" stroke-width="2"><path d="M0 16h17M0 6h4M0 11h4M11 0v10" fill="none"/><path fill="#a0a3a5" stroke="none" d="M7 8h8l-4 5z"/></svg>

<!-- bottom tool bar -->
<div style="left:0;top:989px;width:1920px;height:1px;background:#323232"></div>
<div style="left:0;top:1016px;width:1920px;height:1px;background:#323232"></div>
<div style="left:470px;top:990px;width:75px;height:26px;background:#2c2e2f"></div>
<svg class="i" style="left:40px;top:999px" width="10" height="13"><path fill="#a0a3a5" d="M0 0l10 6.500L0 13z"/></svg>
<span class="t h" style="left:59px;top:993px">Run</span>
<svg class="i" style="left:108px;top:999px" width="14" height="12" stroke="#a0a3a5" stroke-width="2"><path d="M0 1h3M5 1h9M0 6h3M5 6h9M0 11h3M5 11h9"/></svg>
<span class="t h" style="left:128px;top:993px">TODO</span>
<svg class="i" style="left:192px;top:998px" width="14" height="14"><circle cx="7" cy="7" r="7" fill="#a0a3a5"/><path stroke="#3c3f41" stroke-width="2" d="M7 3v5M7 9.500v2"/></svg>
<span class="t h" style="left:213px;top:993px">Problems</span>
<svg class="i" style="left:297px;top:998px" width="15" height="14"><rect width="15" height="14" fill="#a0a3a5"/><path fill="none" stroke="#3c3f41" stroke-width="1.300" d="M2 3l3 3-3 3M7 10h5"/></svg>
<span class="t h" style="left:318px;top:993px">Terminal</span>
<svg class="i" style="left:396px;top:999px" width="14" height="12" stroke="#a0a3a5" stroke-width="2"><path d="M0 1h13M0 6h8M0 11h11"/></svg>
<span class="t h" style="left:416px;top:993px">Logcat</span>
<svg class="i" style="left:482px;top:997px" width="17" height="17"><path fill="#c5c7c8" d="M0 5l4-4 3 2 1 2 8 9-3 2-8-9-2-1-1 2z"/></svg>
<span class="t h" style="left:504px;top:993px;color:#eee">Build</span>
<svg class="i" style="left:557px;top:999px" width="17" height="12" fill="none" stroke-width="3"><path stroke="#a0a3a5" d="M2 12A7 7 0 0 1 9 2"/><path stroke="#a0a3a5" d="M12 3a7 7 0 0 1 3 9"/></svg>
<span class="t h" style="left:579px;top:993px">Profiler</span>
<svg class="i" style="left:652px;top:997px" width="14" height="17"><circle cx="7" cy="5" r="4.500" fill="#a0a3a5"/><path fill="#a0a3a5" d="M2 8h10v3h2v2h-2v4H2v-4H0v-2h2z"/></svg>
<span class="t h" style="left:673px;top:993px">App Inspection</span>
<div style="left:1642px;top:997px;width:17px;height:17px;border-radius:50%;background:#c75450"></div>
<span class="t b" style="left:1647px;top:994px;font-size:13px;color:#fff">6</span>
<span class="t h" style="left:1664px;top:993px">Event Log</span>
<svg class="i" style="left:1754px;top:996px" width="17" height="17" fill="none" stroke="#a0a3a5" stroke-width="1.300"><path d="M1 1h9v3M1 1v9h3"/><rect x="4" y="4" width="9" height="8"/><circle cx="11" cy="10" r="3" fill="#3c3f41"/><path stroke-width="2" d="M13 12l4 4"/></svg>
<span class="t h" style="left:1776px;top:993px">Layout Inspector</span>

<!-- status -->
<svg class="i" style="left:7px;top:1022px" width="17" height="16" fill="none" stroke="#9a9da0" stroke-width="1.300"><rect x="4" y="1" width="11" height="11"/><path d="M1 4v11h11"/></svg>
<span class="t" style="left:34px;top:1019px;font-size:16.600px">Failed to start monitoring c1bab4d0 (a minute ago)</span>
<span class="t" style="left:1610px;top:1019px;font-size:15.500px">32:34</span>
<span class="t" style="left:1666px;top:1019px;font-size:15.500px">LF</span>
<span class="t" style="left:1697px;top:1019px;font-size:15.500px;color:#6a6d6f">UTF-8</span>
<span class="t" style="left:1754px;top:1019px;font-size:15.500px">4 spaces</span>
<div style="left:1833px;top:1030px;width:11px;height:8px;background:#a0a3a5"></div>
<svg class="i" style="left:1860px;top:1022px" width="56" height="18"><circle cx="9" cy="9" r="8.500" fill="#a0a3a5"/><path fill="none" stroke="#3c3f41" stroke-width="1.500" d="M4 10c2 4 8 4 10 0"/><circle cx="39" cy="9" r="8.500" fill="#a0a3a5"/><path fill="none" stroke="#3c3f41" stroke-width="1.500" d="M34 13c2-3 8-3 10 0"/></svg>
<div style="left:1909px;top:962px;width:11px;height:66px;background:linear-gradient(#2c3a4a 0,#2c3a4a 15%,#b86b3a 25%,#c9a23a 50%,#6a9a40 75%,#2fa58d 100%);border-radius:3px 0 0 3px"></div>
<span class="t" style="left:1695px;top:1010px;font-size:19px;color:rgba(255,255,255,.78);font-family:'Liberation Sans','Noto Sans CJK SC',sans-serif">CSDN @阿杰杰杰のblog</span>

</div>
</body></html>
